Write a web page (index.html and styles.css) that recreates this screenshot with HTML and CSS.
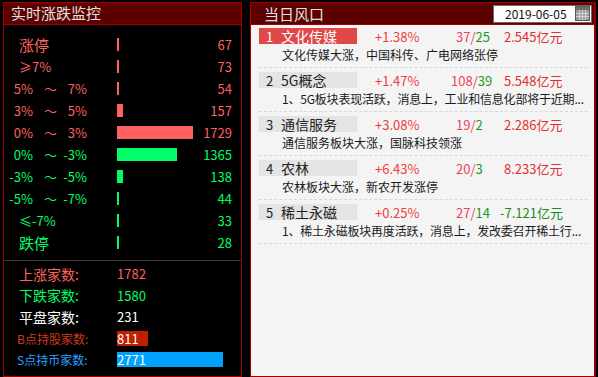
FILE: index.html
```
<!DOCTYPE html>
<html lang="zh-CN">
<head>
    <meta charset="UTF-8">
    <title>涨跌监控</title>
    <link rel="stylesheet" href="styles.css">
</head>
<body>
    <!-- Left: live up/down distribution -->
    <div class="panel monitor">
        <div class="panel-title">实时涨跌监控</div>

        <div class="dist">
            <div class="row up"><span class="label big">涨停</span><span class="bar"><i style="width:2px"></i></span><span class="num">67</span></div>
            <div class="row up"><span class="label">≥7%</span><span class="bar"><i style="width:2px"></i></span><span class="num">73</span></div>
            <div class="row up"><span class="label range"><b>5%</b><b>～</b><b>7%</b></span><span class="bar"><i style="width:2px"></i></span><span class="num">54</span></div>
            <div class="row up"><span class="label range"><b>3%</b><b>～</b><b>5%</b></span><span class="bar"><i style="width:6px"></i></span><span class="num">157</span></div>
            <div class="row up"><span class="label range"><b>0%</b><b>～</b><b>3%</b></span><span class="bar"><i style="width:76px"></i></span><span class="num">1729</span></div>
            <div class="row down"><span class="label range"><b>0%</b><b>～</b><b>-3%</b></span><span class="bar"><i style="width:60px"></i></span><span class="num">1365</span></div>
            <div class="row down"><span class="label range"><b>-3%</b><b>～</b><b>-5%</b></span><span class="bar"><i style="width:6px"></i></span><span class="num">138</span></div>
            <div class="row down"><span class="label range"><b>-5%</b><b>～</b><b>-7%</b></span><span class="bar"><i style="width:2px"></i></span><span class="num">44</span></div>
            <div class="row down"><span class="label">≤-7%</span><span class="bar"><i style="width:2px"></i></span><span class="num">33</span></div>
            <div class="row down"><span class="label big">跌停</span><span class="bar"><i style="width:2px"></i></span><span class="num">28</span></div>
        </div>

        <div class="summary">
            <div class="stat up"><span class="stat-label">上涨家数:</span><span class="stat-val">1782</span></div>
            <div class="stat down"><span class="stat-label">下跌家数:</span><span class="stat-val">1580</span></div>
            <div class="stat flat"><span class="stat-label">平盘家数:</span><span class="stat-val">231</span></div>
            <div class="stat buy"><span class="stat-label small">B点持股家数:</span><span class="stat-val"><em style="width:31px">811</em></span></div>
            <div class="stat sell"><span class="stat-label small">S点持币家数:</span><span class="stat-val"><em style="width:106px">2771</em></span></div>
        </div>
    </div>

    <!-- Right: today's hot sectors -->
    <div class="panel hot">
        <div class="panel-title hot-title">
            <span>当日风口</span>
            <div class="date-box">
                <span class="date-text">2019-06-05</span>
                <svg class="cal" width="15" height="15" viewBox="0 0 15 15">
                    <rect x="0.5" y="0.5" width="14" height="14" fill="#9c9c9c" stroke="#5a5a5a"/>
                    <rect x="1" y="1" width="13" height="3" fill="#6e6e6e"/>
                    <path d="M1 7.5H14M1 10.5H14M4.5 4V14M7.5 4V14M10.5 4V14" stroke="#d4d4d4" stroke-width="1"/>
                </svg>
            </div>
        </div>

        <div class="hot-list">
            <div class="item">
                <div class="item-head">
                    <span class="tag active"><span class="rank">1</span>文化传媒</span>
                    <span class="chg">+1.38%</span>
                    <span class="cnt"><span class="c-up">37/</span><span class="c-dn">25</span></span>
                    <span class="amt">2.545亿元</span>
                </div>
                <div class="desc">文化传媒大涨，中国科传、广电网络张停</div>
            </div>
            <div class="item">
                <div class="item-head">
                    <span class="tag"><span class="rank">2</span>5G概念</span>
                    <span class="chg">+1.47%</span>
                    <span class="cnt wide"><span class="c-up">108/</span><span class="c-dn">39</span></span>
                    <span class="amt">5.548亿元</span>
                </div>
                <div class="desc tight">1、5G板块表现活跃，消息上，工业和信息化部将于近期...</div>
            </div>
            <div class="item">
                <div class="item-head">
                    <span class="tag"><span class="rank">3</span>通信服务</span>
                    <span class="chg">+3.08%</span>
                    <span class="cnt"><span class="c-up">19/</span><span class="c-dn">2</span></span>
                    <span class="amt">2.286亿元</span>
                </div>
                <div class="desc">通信服务板块大涨，国脉科技领涨</div>
            </div>
            <div class="item">
                <div class="item-head">
                    <span class="tag"><span class="rank">4</span>农林</span>
                    <span class="chg">+6.43%</span>
                    <span class="cnt"><span class="c-up">20/</span><span class="c-dn">3</span></span>
                    <span class="amt">8.233亿元</span>
                </div>
                <div class="desc">农林板块大涨，新农开发涨停</div>
            </div>
            <div class="item">
                <div class="item-head">
                    <span class="tag"><span class="rank">5</span>稀土永磁</span>
                    <span class="chg">+0.25%</span>
                    <span class="cnt"><span class="c-up">27/</span><span class="c-dn">14</span></span>
                    <span class="amt neg">-7.121亿元</span>
                </div>
                <div class="desc tight">1、稀土永磁板块再度活跃，消息上，发改委召开稀土行...</div>
            </div>
        </div>
    </div>
</body>
</html>
```

FILE: styles.css
```
/*
==========================================
= Page: black backdrop, two framed panels =
==========================================
*/
body {
    margin: 0;
    padding: 2px 0 0 3px;
    background: #000;
    display: flex;
    gap: 8px;
    font-family: "Noto Sans CJK SC", "DejaVu Sans", sans-serif;
    font-size: 13px;
}

.panel {
    box-sizing: border-box;
    height: 375px;
    border: 1px solid #a40000;
}

.panel-title {
    box-sizing: border-box;
    height: 22px;
    background: #5c0000;
    border-bottom: 1px solid #a40000;
    color: #e2e2e2;
    font-size: 15px;
    line-height: 20px;
    padding-left: 7px;
}

/*
=====================================
= Monitor: up/down distribution     =
=====================================
*/
.monitor {
    width: 239px;
}

.dist {
    padding: 8px 9px 7px 0;
}

.row {
    display: grid;
    grid-template-columns: 113px 1fr auto;
    align-items: center;
    height: 22px;
}

.row.up { color: #ff6060; }
.row.down { color: #00ff66; }

.label {
    padding-left: 15px;
    font-size: 13px;
}

.label.big {
    font-size: 15px;
}

.label.range {
    display: grid;
    grid-template-columns: 29px 24px 30px;
    padding-left: 0;
}

.label.range b {
    font-weight: normal;
    text-align: right;
}

.bar i {
    display: block;
    height: 13px;
}

.up .bar i { background: #ff6060; }
.down .bar i { background: #00ff66; }

.num {
    text-align: right;
}

.summary {
    border-top: 1px solid #3c3c3c;
    padding-top: 2px;
}

.stat {
    display: grid;
    grid-template-columns: 113px 1fr;
    align-items: center;
    height: 21.5px;
}

.stat-label {
    padding-left: 15px;
    font-size: 14px;
}

.stat-label.small {
    padding-left: 13px;
    font-size: 12px;
}

.stat.up { color: #ff6060; }
.stat.down { color: #00ff66; }
.stat.flat { color: #fff; }
.stat.buy { color: #d03a18; }
.stat.sell { color: #2aa2ff; }

.stat-val em {
    display: block;
    font-style: normal;
    color: #fff;
    height: 15px;
    line-height: 15px;
    white-space: nowrap;
}

.buy em { background: #c02000; }
.sell em { background: #00a2ff; }

/*
==============================
= Hot: today's hot sectors   =
==============================
*/
.hot {
    width: 346px;
    background: #f4f4f4;
    border-right-width: 2px;
    border-right-color: #8a0000;
}

.hot-title {
    display: flex;
    justify-content: space-between;
    align-items: center;
    padding-left: 13px;
    padding-right: 2px;
}

.date-box {
    box-sizing: border-box;
    display: flex;
    align-items: center;
    justify-content: space-between;
    width: 99px;
    height: 18px;
    background: #fff;
    border: 1px solid #6a6a6a;
    padding: 0 1px 0 11px;
    color: #111;
    font-size: 12px;
    line-height: 16px;
}

.cal {
    display: block;
}

.hot-list {
    padding: 3px 6px 0 8px;
}

.item {
    border-bottom: 1px dashed #d8d8d8;
    margin-bottom: 4px;
}

.item-head {
    display: flex;
    align-items: center;
    height: 16px;
}

.tag {
    box-sizing: border-box;
    width: 98px;
    height: 16px;
    background: #e4e4e4;
    color: #222;
    font-size: 14px;
    line-height: 16px;
    padding-left: 7px;
}

.tag.active {
    background: #e04848;
    color: #fff;
}

.rank {
    display: inline-block;
    width: 15px;
    font-size: 13px;
}

.chg {
    width: 81px;
    padding-left: 18px;
    color: #f03c3c;
}

.cnt {
    width: 48px;
}

.cnt.wide {
    margin-left: -5px;
    width: 53px;
}

.c-up { color: #f04060; }
.c-dn { color: #1a9a1a; }

.amt {
    color: #e03030;
}

.amt.neg {
    margin-left: -4px;
    color: #1a8a1a;
}

.desc {
    height: 23px;
    line-height: 22px;
    padding-left: 23px;
    color: #1a1a1a;
    font-size: 12px;
    white-space: nowrap;
}

.desc.tight {
    letter-spacing: -0.2px;
}
```
